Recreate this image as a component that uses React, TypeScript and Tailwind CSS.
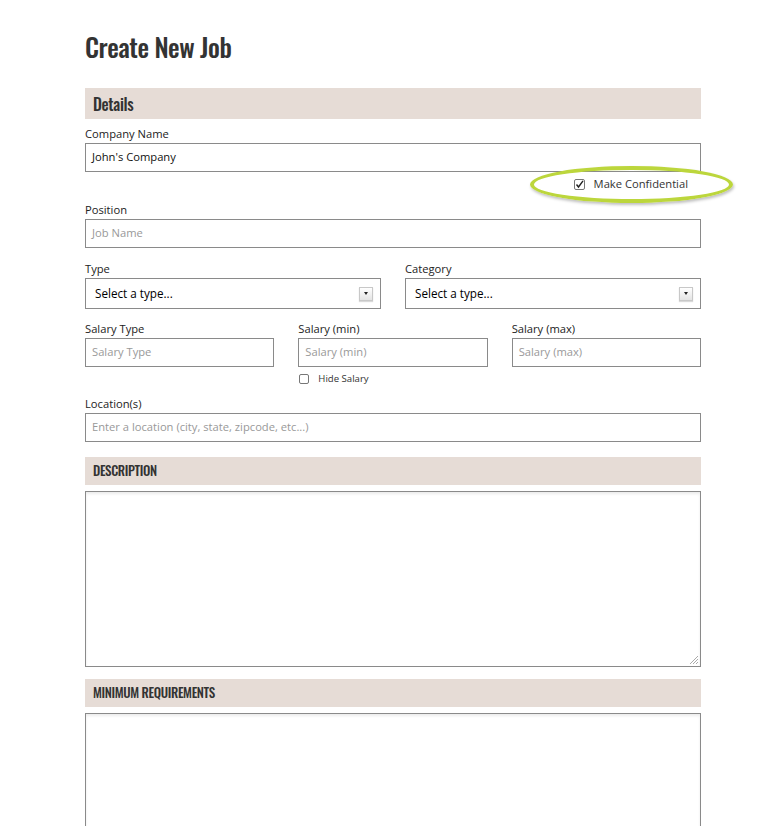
import React from "react";

const heading = "font-['Oswald','Liberation_Sans_Narrow','DejaVu_Sans_Condensed',sans-serif]";

function Label({ children }: { children: React.ReactNode }) {
  return <div className="text-[11.2px] leading-[14px] text-[#222] mb-[2px]">{children}</div>;
}

function TextBox({ value, placeholder }: { value?: string; placeholder?: string }) {
  return (
    <div className="h-[29px] border border-[#8a8a8a] bg-white flex items-center px-[6px] text-[11.2px]">
      {value ? <span className="text-[#111]">{value}</span> : <span className="text-[#999]">{placeholder}</span>}
    </div>
  );
}

function Select() {
  return (
    <div className="h-[31px] border border-[#8a8a8a] bg-white flex items-center pl-[9px] pr-[7px] text-[11.7px] text-[#000]">
      <span className="flex-1">Select a type...</span>
      <span className="w-[14px] h-[14px] border border-[#c8c8c8] bg-gradient-to-b from-[#ffffff] to-[#e4e4e4] flex items-center justify-center shadow-[0_1px_1px_rgba(0,0,0,0.15)]">
        <span className="w-0 h-0 border-l-[2.5px] border-r-[2.5px] border-t-[3px] border-l-transparent border-r-transparent border-t-[#222]" />
      </span>
    </div>
  );
}

function Bar({ children, big }: { children: React.ReactNode; big?: boolean }) {
  return (
    <div className={`bg-[#e6dcd6] flex items-center px-[8px] text-[#333] ${heading} ${big ? "h-[31px] text-[16px]" : "h-[28px] text-[13px] uppercase"} font-medium tracking-[-0.35px]`}>
      {children}
    </div>
  );
}

function TextArea({ h }: { h: string }) {
  return (
    <div className={`${h} relative border border-[#8a8a8a] bg-white shadow-[inset_0_2px_3px_rgba(0,0,0,0.08)]`}>
      <svg className="absolute right-[1px] bottom-[1px]" width="11" height="11" viewBox="0 0 11 11">
        <line x1="10" y1="2" x2="2" y2="10" stroke="#aaa" strokeWidth="1" />
        <line x1="10" y1="5" x2="5" y2="10" stroke="#aaa" strokeWidth="1" />
        <line x1="10" y1="8" x2="8" y2="10" stroke="#aaa" strokeWidth="1" />
      </svg>
    </div>
  );
}

function CheckBox({ checked, size = 10 }: { checked?: boolean; size?: number }) {
  return (
    <span
      className="inline-flex items-center justify-center border border-[#777] bg-white rounded-[2px] shrink-0"
      style={{ width: size, height: size }}
    >
      {checked && (
        <svg width="9" height="9" viewBox="0 0 9 9">
          <path d="M1.5 4.5 L3.5 7 L8 0.8" fill="none" stroke="#222" strokeWidth="1.4" />
        </svg>
      )}
    </span>
  );
}

export default function App() {
  return (
    <div className="min-h-screen bg-white font-['Open_Sans',sans-serif] overflow-hidden">
      <div className="w-[616px] ml-[85px] pt-[28px]">
        <h1 className={`${heading} text-[26px] leading-[38px] font-medium text-[#333] tracking-[-0.45px] mb-[22px]`}>Create New Job</h1>
        <Bar big>Details</Bar>
        <div className="mt-[8px]">
          <Label>Company Name</Label>
          <TextBox value="John's Company" />
          <div className="relative flex justify-end items-center gap-[9px] pr-[13px] mt-[6px] h-[12px] text-[11.2px] text-[#333]">
            <CheckBox checked size={11} />
            <span>Make Confidential</span>
            <div className="absolute left-[445px] top-[-12px] w-[203px] h-[37px] rounded-[50%] border-[4px] border-[#bcd63c] shadow-[1px_2px_3px_rgba(0,0,0,0.25)]" />
          </div>
        </div>
        <div className="mt-[13px]">
          <Label>Position</Label>
          <TextBox placeholder="Job Name" />
        </div>
        <div className="mt-[14px] grid grid-cols-2 gap-x-[24px]">
          <div>
            <Label>Type</Label>
            <Select />
          </div>
          <div>
            <Label>Category</Label>
            <Select />
          </div>
        </div>
        <div className="mt-[13px] grid grid-cols-3 gap-x-[24px]">
          <div>
            <Label>Salary Type</Label>
            <TextBox placeholder="Salary Type" />
          </div>
          <div>
            <Label>Salary (min)</Label>
            <TextBox placeholder="Salary (min)" />
            <div className="flex items-center gap-[9px] mt-[7px] h-[10px] pl-[1px] text-[9.6px] text-[#333]">
              <CheckBox size={10} />
              <span>Hide Salary</span>
            </div>
          </div>
          <div>
            <Label>Salary (max)</Label>
            <TextBox placeholder="Salary (max)" />
          </div>
        </div>
        <div className="mt-[13px]">
          <Label>Location(s)</Label>
          <TextBox placeholder="Enter a location (city, state, zipcode, etc...)" />
        </div>
        <div className="mt-[15px]">
          <Bar>Description</Bar>
        </div>
        <div className="mt-[6px]">
          <TextArea h="h-[176px]" />
        </div>
        <div className="mt-[12px]">
          <Bar>Minimum Requirements</Bar>
        </div>
        <div className="mt-[6px]">
          <TextArea h="h-[176px]" />
        </div>
      </div>
    </div>
  );
}
